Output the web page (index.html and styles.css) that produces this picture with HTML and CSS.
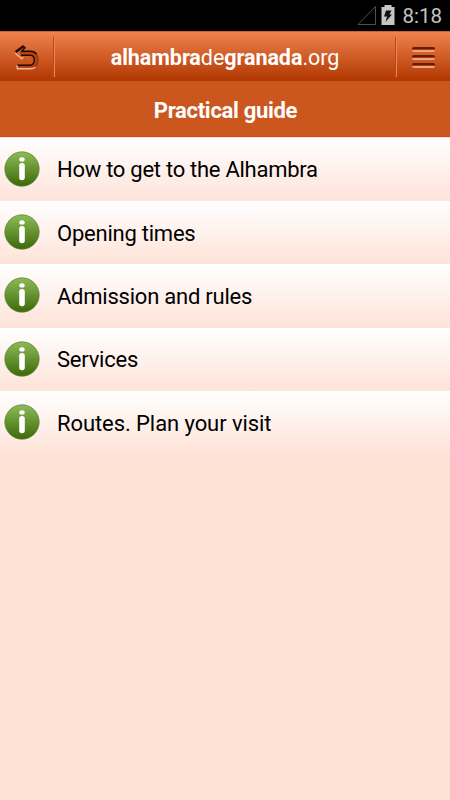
FILE: index.html
```html
<!DOCTYPE html>
<html lang="en">
<head>
  <meta charset="UTF-8" />
  <meta name="viewport" content="width=device-width, initial-scale=1" />
  <title>Practical guide - alhambradegranada.org</title>
  <link rel="stylesheet" href="styles.css">
</head>
<body>

<svg class="defs" width="0" height="0">
  <defs>
    <linearGradient id="green" x1="0" y1="0" x2="0" y2="1">
      <stop offset="0" stop-color="#8dbb58" />
      <stop offset="1" stop-color="#3d6a08" />
    </linearGradient>
    <symbol id="info" viewBox="0 0 36 36">
      <circle cx="18" cy="18" r="17.2" fill="url(#green)" stroke="#5c7f38" stroke-opacity=".7" />
      <ellipse cx="18" cy="8.4" rx="2.7" ry="2.2" fill="#fff" />
      <rect x="15.2" y="12" width="5.6" height="17.2" rx="2.6" fill="#fff" />
    </symbol>
  </defs>
</svg>

<div class="status-bar">
  <svg class="signal" width="20" height="21" viewBox="0 0 20 21">
    <path d="M1 19.5 L18.5 1.5 V19.5 Z" fill="none" stroke="#505050" />
  </svg>
  <svg class="battery" width="14" height="21" viewBox="0 0 14 21">
    <path d="M3.5 0 H10.5 V2 H13.5 V20 H0.5 V2 H3.5 Z" fill="#c6c6c6" />
    <path d="M5 5.5 H10.5 L8.5 9.5 H11 L4.5 17 L6 11.5 H3 Z" fill="#111" />
  </svg>
  <span class="clock">8:18</span>
</div>

<header class="top-bar">
  <a class="back" href="#" aria-label="Back">
    <svg width="26" height="28" viewBox="0 0 26 28">
      <g fill="none" stroke-linejoin="round">
        <path d="M3.5 24 H16 Q22.5 23.5 22.5 16.5 Q22.5 10.2 16.5 10 H6" stroke="#b5410f" stroke-width="3" />
        <path d="M18 8.8 Q24 9.5 24 16.5 Q24 22 20 24.3" stroke="#8c3a17" stroke-width="1.3" />
        <path d="M3.2 22 V25.8 H16 Q19.5 25.8 21.5 24" stroke="#f4b49a" stroke-width="1.4" />
        <path d="M1.2 10 L7.6 15.8 L9.4 14.4" stroke="#f4b49a" stroke-width="1.3" />
        <path d="M9.8 3 L1.6 9" stroke="#1c0903" stroke-width="2.2" />
        <path d="M9.3 3.3 L11 4.8 L7.5 8.3 H16.5 Q20.3 8.3 22.5 11" stroke="#1c0903" stroke-width="1.5" />
        <path d="M7 12.2 H16.5 Q20.3 12.4 20.3 16.8 Q20.3 22.2 16 22.2 H3.5" stroke="#1c0903" stroke-width="1.4" />
      </g>
    </svg>
  </a>
  <h1 class="site-name"><b>alhambra</b>de<b>granada</b>.org</h1>
  <a class="menu" href="#" aria-label="Menu">
    <span class="line"></span>
    <span class="line"></span>
    <span class="line"></span>
  </a>
</header>

<h2 class="page-title">Practical guide</h2>

<ul class="guide-list">
  <li><svg class="icon"><use href="#info" /></svg><span class="tight">How to get to the Alhambra</span></li>
  <li><svg class="icon"><use href="#info" /></svg><span>Opening times</span></li>
  <li><svg class="icon"><use href="#info" /></svg><span>Admission and rules</span></li>
  <li><svg class="icon"><use href="#info" /></svg><span>Services</span></li>
  <li><svg class="icon"><use href="#info" /></svg><span class="loose">Routes. Plan your visit</span></li>
</ul>

</body>
</html>
```

FILE: styles.css
```css
* {
  box-sizing: border-box;
}
body {
  margin: 0;
  min-height: 100vh;
  background: #fee2d6;
  font-family: Roboto, "Noto Sans", sans-serif;
  color: #000;
}
.defs {
  display: block;
}
.status-bar {
  display: flex;
  justify-content: flex-end;
  align-items: center;
  height: 31px;
  padding-right: 8px;
  background: #000;
}
.signal {
  margin: 0 4px 0 0;
}
.battery {
  margin-right: 7px;
}
.clock {
  padding-top: 2px;
  font-size: 20.5px;
  line-height: 29px;
  color: #c4c4c4;
}
.top-bar {
  display: flex;
  align-items: center;
  height: 50px;
  background: linear-gradient(#ef824e, #b13700);
  border-top: 1px solid #c86438;
}
.back,
.menu {
  display: flex;
  height: 40px;
  width: 55px;
}
.back {
  align-items: center;
  padding-left: 14px;
  border-right: 1px solid #ed8455;
  box-shadow: inset -1px 0 #b94a1a;
}
.menu {
  flex-direction: column;
  gap: 3px;
  padding: 10px 0 0 16px;
  border-left: 1px solid #b94a1a;
  box-shadow: inset 1px 0 #ed8455;
}
.line {
  width: 23px;
  height: 5px;
  border-top: 2px solid #691c00;
  border-bottom: 2px solid #eda282;
  border-radius: 2px;
  background: #a83a0c;
}
.site-name {
  flex: 1;
  margin: 0;
  padding-top: 3px;
  font-size: 21.5px;
  font-weight: 400;
  line-height: 26px;
  letter-spacing: -0.05px;
  text-align: center;
  color: #fff;
}
.site-name b {
  font-weight: 700;
}
.page-title {
  height: 56px;
  margin: 0;
  padding: 1px 0 0 1px;
  font-size: 22px;
  font-weight: 700;
  line-height: 58px;
  letter-spacing: -0.3px;
  text-align: center;
  color: #fff;
  background: #cb571f;
  border-bottom: 1px solid #c84c10;
}
.guide-list {
  margin: 0;
  padding: 0.6px 0 0;
  list-style: none;
}
.guide-list li {
  display: flex;
  align-items: center;
  height: 63.35px;
  padding: 0 0 1px 4px;
  font-size: 22px;
  letter-spacing: -0.23px;
  background: linear-gradient(#fff, #fee3d8);
}
.icon {
  width: 36px;
  height: 36px;
  margin-right: 17px;
}
.guide-list span {
  padding-top: 2px;
}
.guide-list .tight {
  letter-spacing: -0.27px;
}
.guide-list .loose {
  letter-spacing: -0.08px;
}
```
